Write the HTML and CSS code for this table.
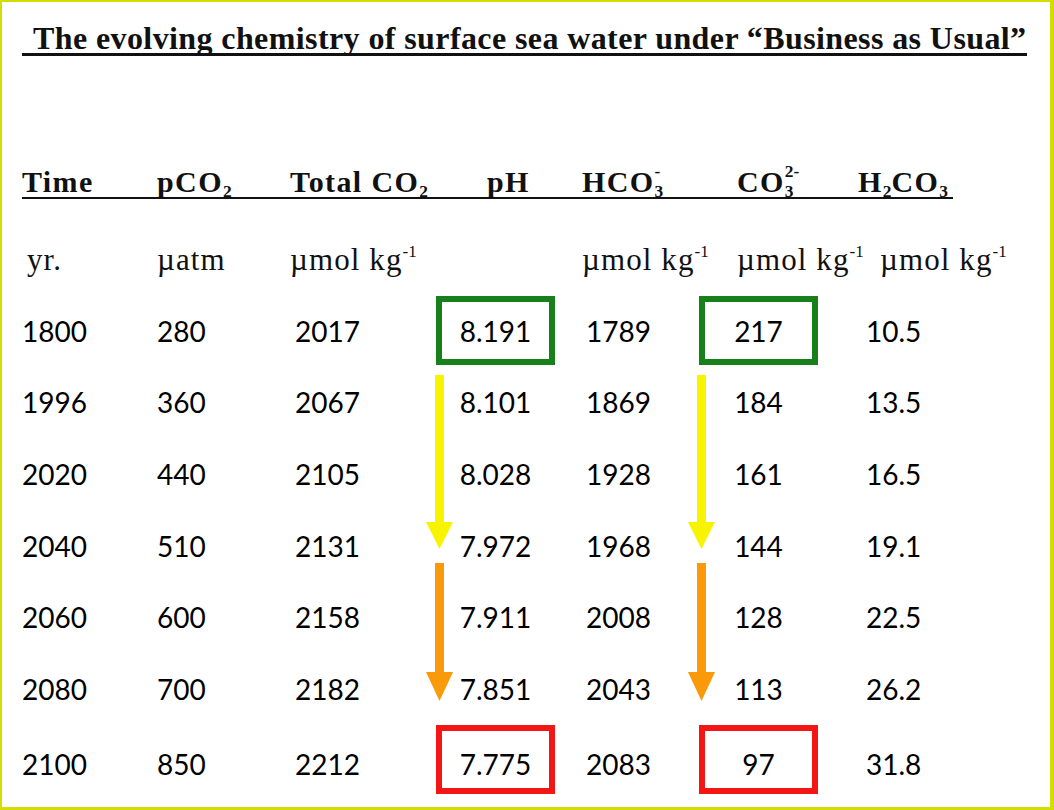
FILE: index.html
```html
<!DOCTYPE html>
<html>
<head>
<meta charset="utf-8">
<link rel="stylesheet" href="styles.css">
</head>
<body>
<div class="frame">
  <h1 class="title"><span class="title-text">The evolving chemistry of surface sea water under “Business as Usual”</span></h1>
  <div class="table">
    <div class="row head">
      <div class="c">Time</div>
      <div class="c">pCO<sub>2</sub></div>
      <div class="c">Total CO<sub>2</sub></div>
      <div class="c ph">pH</div>
      <div class="c">HCO<sub>3</sub><sup class="back">-</sup></div>
      <div class="c co3">CO<sub>3</sub><sup class="back">2-</sup></div>
      <div class="c">H<sub>2</sub>CO<sub>3</sub></div>
    </div>
    <div class="row units">
      <div class="c yr">yr.</div>
      <div class="c">µatm</div>
      <div class="c">µmol kg<sup>-1</sup></div>
      <div class="c"></div>
      <div class="c">µmol kg<sup>-1</sup></div>
      <div class="c co3">µmol kg<sup>-1</sup></div>
      <div class="c h2">µmol kg<sup>-1</sup></div>
    </div>
    <div class="rows">
      <div class="row data">
        <div class="c">1800</div><div class="c">280</div><div class="c t">2017</div>
        <div class="c box green">8.191</div><div class="c h">1789</div>
        <div class="c box green">217</div><div class="c h2c">10.5</div>
      </div>
      <div class="row data">
        <div class="c">1996</div><div class="c">360</div><div class="c t">2067</div>
        <div class="c box">8.101</div><div class="c h">1869</div>
        <div class="c box">184</div><div class="c h2c">13.5</div>
      </div>
      <div class="row data">
        <div class="c">2020</div><div class="c">440</div><div class="c t">2105</div>
        <div class="c box">8.028</div><div class="c h">1928</div>
        <div class="c box">161</div><div class="c h2c">16.5</div>
      </div>
      <div class="row data">
        <div class="c">2040</div><div class="c">510</div><div class="c t">2131</div>
        <div class="c box">7.972</div><div class="c h">1968</div>
        <div class="c box">144</div><div class="c h2c">19.1</div>
      </div>
      <div class="row data">
        <div class="c">2060</div><div class="c">600</div><div class="c t">2158</div>
        <div class="c box">7.911</div><div class="c h">2008</div>
        <div class="c box">128</div><div class="c h2c">22.5</div>
      </div>
      <div class="row data">
        <div class="c">2080</div><div class="c">700</div><div class="c t">2182</div>
        <div class="c box">7.851</div><div class="c h">2043</div>
        <div class="c box">113</div><div class="c h2c">26.2</div>
      </div>
      <div class="row data">
        <div class="c">2100</div><div class="c">850</div><div class="c t">2212</div>
        <div class="c box red">7.775</div><div class="c h">2083</div>
        <div class="c box red">97</div><div class="c h2c">31.8</div>
      </div>

      <svg class="arrow yellow a-ph" viewBox="0 0 27 174" preserveAspectRatio="none">
        <rect x="9" y="0" width="9" height="148"/>
        <polygon points="0,147 27,147 13.5,174"/>
      </svg>
      <svg class="arrow yellow a-co3" viewBox="0 0 27 174" preserveAspectRatio="none">
        <rect x="9" y="0" width="9" height="148"/>
        <polygon points="0,147 27,147 13.5,174"/>
      </svg>
      <svg class="arrow orange a-ph2" viewBox="0 0 27 138" preserveAspectRatio="none">
        <rect x="9" y="0" width="9" height="110"/>
        <polygon points="0,109 27,109 13.5,138"/>
      </svg>
      <svg class="arrow orange a-co32" viewBox="0 0 27 138" preserveAspectRatio="none">
        <rect x="9" y="0" width="9" height="110"/>
        <polygon points="0,109 27,109 13.5,138"/>
      </svg>
    </div>
  </div>
</div>
</body>
</html>
```

FILE: styles.css
```css
html, body {
  margin: 0;
  padding: 0;
  background: #ffffff;
}

.frame {
  width: 1054px;
  height: 810px;
  box-sizing: border-box;
  border: 2px solid #d4dc00;
  border-right-width: 4px;
  border-bottom-width: 3px;
  background: #ffffff;
  color: #111111;
  overflow: hidden;
}

.title {
  margin: 0;
  padding: 22px 0 0 20px;
  font-family: "Liberation Serif", "Times New Roman", serif;
  font-weight: bold;
  font-size: 32px;
  line-height: 29px;
  letter-spacing: 0.4px;
  white-space: nowrap;
}

.title-text {
  display: inline-block;
  padding-left: 11px;
  border-bottom: 3px solid #111111;
}

.table {
  padding-left: 20px;
}

.row {
  display: grid;
  grid-template-columns: 135px 133px 146px 146px 117px 159px 1fr;
}

.head {
  width: 931px;
  grid-template-columns: 135px 133px 146px 146px 117px 159px 95px;
  grid-template-rows: 30px;
  margin-top: 111px;
  font-family: "Liberation Serif", "Times New Roman", serif;
  font-weight: bold;
  font-size: 30px;
  line-height: 30px;
  letter-spacing: 1.4px;
  border-bottom: 2px solid #111111;
  white-space: nowrap;
}

.head sub {
  font-size: 0.58em;
  line-height: 0;
  vertical-align: -0.3em;
  letter-spacing: 0;
}

.head sup {
  font-size: 0.58em;
  line-height: 0;
  vertical-align: 0.85em;
  letter-spacing: 0;
}

.head sup.back {
  margin-left: -0.5em;
}

.head .ph { padding-left: 51px; }
.head .co3 { padding-left: 38px; }

.units {
  margin-top: 46px;
  font-family: "Liberation Serif", "Times New Roman", serif;
  font-size: 31px;
  line-height: 30px;
  letter-spacing: 1.1px;
  white-space: nowrap;
}

.units sup {
  font-size: 0.55em;
  line-height: 0;
  vertical-align: 0.75em;
  letter-spacing: 0;
}

.units .yr { padding-left: 5px; }
.units .co3 { padding-left: 38px; }
.units .h2 { padding-left: 22px; }

.rows {
  position: relative;
  margin-top: 20px;
  display: grid;
  grid-auto-rows: 71.67px;
}

.data {
  font-family: Lato, "Noto Sans", sans-serif;
  font-size: 28px;
  color: #000000;
  align-items: center;
}

.data .t { padding-left: 5px; }
.data .h { padding-left: 4px; }
.data .h2c { padding-left: 8px; }

.box {
  box-sizing: border-box;
  width: 119px;
  height: 69px;
  border: 6px solid transparent;
  display: flex;
  align-items: center;
  justify-content: center;
}

.box.green { border-color: #17801a; }

.box.red {
  border-color: #f41515;
  margin-bottom: 10px;
  padding-top: 10px;
}

.arrow {
  position: absolute;
  width: 27px;
}

.arrow.yellow { fill: #f8f400; height: 174px; top: 80px; }
.arrow.orange { fill: #fa9a0a; height: 138px; top: 268px; }

.a-ph, .a-ph2 { left: 404px; }
.a-co3, .a-co32 { left: 666px; }
```
